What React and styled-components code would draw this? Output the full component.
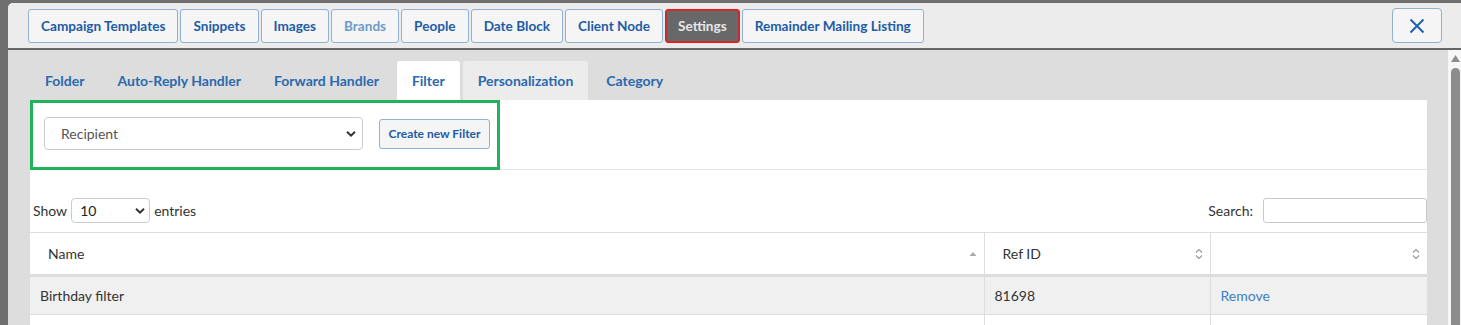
import React from "react"
import styled, { createGlobalStyle } from "styled-components"

const GlobalStyle = createGlobalStyle`
  html, body {
    margin: 0;
    padding: 0;
    height: 100%;
    overflow: hidden;
  }
  body {
    background: #6f6f6f;
    font-family: Lato, "Liberation Sans", sans-serif;
  }
`

const Backdrop = styled.div`
  height: 325px;
  padding: 3px 0 0 8px;
  box-sizing: border-box;
  display: flex;
`

const Modal = styled.div`
  flex: 1;
  display: flex;
  flex-direction: column;
  background: #dddddd;
  border-top-left-radius: 5px;
  overflow: hidden;
`

const Header = styled.div`
  display: flex;
  align-items: center;
  justify-content: space-between;
  height: 47px;
  padding: 0 19px 0 20px;
  background: #ececec;
  border-bottom: 2px solid #666;
  box-sizing: border-box;
  flex-shrink: 0;
`

const NavGroup = styled.div`
  display: flex;
  gap: 2px;
`

const NavButton = styled.button`
  height: 34px;
  padding: 0 12px;
  font-family: inherit;
  font-size: 13.6px;
  font-weight: 700;
  border-radius: 3px;
  border-width: 1px;
  border-style: solid;
  border-color: ${(p) => (p.$active ? "#f01818" : "#8fb1d3")};
  box-shadow: ${(p) => (p.$active ? "inset 0 0 0 1px #c03030" : "none")};
  background: ${(p) => (p.$active ? "#686868" : "#f5f5f5")};
  color: ${(p) => (p.$active ? "#e6e6e6" : p.$muted ? "#6d9bcb" : "#1d5ca5")};
  cursor: pointer;
`

const CloseButton = styled.button`
  width: 50px;
  height: 35px;
  display: flex;
  align-items: center;
  justify-content: center;
  background: #f5f5f5;
  border: 1px solid #8fb1d3;
  border-radius: 4px;
  color: #1f62b0;
  padding: 0;
`

const Body = styled.div`
  flex: 1;
  display: flex;
  min-height: 0;
`

const Content = styled.div`
  flex: 1;
  padding: 11px 21px 0 22px;
  min-width: 0;
`

const SubTabs = styled.div`
  display: flex;
  gap: 3px;
  height: 39px;
`

const SubTab = styled.div`
  display: flex;
  align-items: center;
  padding: 0 15px;
  font-size: 14px;
  font-weight: 700;
  color: #2a69ae;
  border-radius: 3px 3px 0 0;
  background: ${(p) => (p.$active ? "#fff" : p.$raised ? "#ececec" : "transparent")};
`

const Panel = styled.div`
  background: #fff;
  height: 100%;
`

const Toolbar = styled.div`
  border-bottom: 1px solid #e4e4e4;
`

const FilterBox = styled.div`
  width: 470px;
  height: 70px;
  box-sizing: border-box;
  border: 3px solid #20b35a;
  display: flex;
  align-items: center;
  gap: 16px;
  padding: 0 0 3px 11px;
  margin-bottom: -1px;
`

const SelectWrap = styled.div`
  position: relative;
  width: ${(p) => p.$w}px;
  height: ${(p) => p.$h}px;
`

const Select = styled.div`
  height: 100%;
  box-sizing: border-box;
  border: 1px solid #cccccc;
  border-radius: 4px;
  display: flex;
  align-items: center;
  padding-left: ${(p) => p.$pad}px;
  font-size: 14px;
  color: ${(p) => p.$color};
  background: #fff;
`

const Chevron = styled.svg`
  position: absolute;
  right: ${(p) => p.$right}px;
  top: 50%;
  transform: translateY(-50%);
`

const SmallButton = styled.button`
  width: 111px;
  height: 30px;
  font-family: inherit;
  font-size: 12px;
  font-weight: 700;
  color: #1d5ca5;
  background: #f5f5f5;
  border: 1px solid #8fb1d3;
  border-radius: 3px;
  padding: 0;
`

const Controls = styled.div`
  display: flex;
  align-items: center;
  justify-content: space-between;
  padding: 28px 0 9px 3px;
  font-size: 14px;
  color: #333;
`

const Inline = styled.div`
  display: flex;
  align-items: center;
  gap: 4px;
`

const SearchInput = styled.div`
  width: 164px;
  height: 25px;
  box-sizing: border-box;
  border: 1px solid #c8c8c8;
  border-radius: 3px;
  margin-left: 6px;
`

const Table = styled.table`
  width: 100%;
  border-collapse: collapse;
  table-layout: fixed;
  font-size: 14px;
  color: #333;
`

const Th = styled.th`
  position: relative;
  height: 41px;
  padding: 0 18px;
  text-align: left;
  font-weight: 400;
  border-top: 1px solid #dddddd;
  border-bottom: 3px solid #dddddd;
  border-left: ${(p) => (p.$first ? "none" : "1px solid #dddddd")};
`

const SortIcon = styled.svg`
  position: absolute;
  right: 7px;
  top: 50%;
  transform: translateY(-50%);
`

const Td = styled.td`
  height: 37px;
  padding: 0 10px;
  background: ${(p) => (p.$shade ? "#f0f0f0" : "#fff")};
  border-bottom: 1px solid #dddddd;
  border-left: ${(p) => (p.$first ? "none" : "1px solid #dddddd")};
  color: ${(p) => (p.$link ? "#3b7fc1" : "#333")};
`

const Scrollbar = styled.div`
  width: 13px;
  background: #f6f6f6;
  display: flex;
  flex-direction: column;
  align-items: flex-end;
  padding: 5px 1px 0 0;
  box-sizing: border-box;
  gap: 6px;
`

const Thumb = styled.div`
  width: 9px;
  flex: 1;
  background: #8c8c8c;
  border-radius: 5px 5px 0 0;
`

const navItems = [
  "Campaign Templates",
  "Snippets",
  "Images",
  "Brands",
  "People",
  "Date Block",
  "Client Node",
  "Settings",
  "Remainder Mailing Listing",
]

const subTabs = ["Folder", "Auto-Reply Handler", "Forward Handler", "Filter", "Personalization", "Category"]

const ChevronDown = ({ right }) => (
  <Chevron $right={right} width="10" height="7" viewBox="0 0 10 7">
    <path d="M1 1.2 5 5.2 9 1.2" fill="none" stroke="#333" strokeWidth="2" />
  </Chevron>
)

const BothArrows = () => (
  <SortIcon width="8" height="12" viewBox="0 0 8 12">
    <path d="M1 4.5 4 1.5 7 4.5M1 7.5 4 10.5 7 7.5" fill="none" stroke="#999" strokeWidth="1.1" />
  </SortIcon>
)

const UpArrow = () => (
  <SortIcon width="8" height="12" viewBox="0 0 8 12">
    <path d="M0.5 8 4 4 7.5 8Z" fill="#aaa" />
  </SortIcon>
)

export default function App() {
  return (
    <>
      <GlobalStyle />
      <Backdrop>
        <Modal>
          <Header>
            <NavGroup>
              {navItems.map((n) => (
                <NavButton key={n} $active={n === "Settings"} $muted={n === "Brands"}>
                  {n}
                </NavButton>
              ))}
            </NavGroup>
            <CloseButton>
              <svg width="16" height="16" viewBox="0 0 16 16">
                <path d="M1.5 1.5 14.5 14.5M14.5 1.5 1.5 14.5" stroke="currentColor" strokeWidth="2" />
              </svg>
            </CloseButton>
          </Header>
          <Body>
            <Content>
              <SubTabs>
                {subTabs.map((t) => (
                  <SubTab key={t} $active={t === "Filter"} $raised={t === "Personalization"}>
                    {t}
                  </SubTab>
                ))}
              </SubTabs>
              <Panel>
                <Toolbar>
                  <FilterBox>
                    <SelectWrap $w={319} $h={33}>
                      <Select $pad={16} $color="#555">Recipient</Select>
                      <ChevronDown right={7} />
                    </SelectWrap>
                    <SmallButton>Create new Filter</SmallButton>
                  </FilterBox>
                </Toolbar>
                <Controls>
                  <Inline>
                    Show
                    <SelectWrap $w={79} $h={25}>
                      <Select $pad={8} $color="#222">10</Select>
                      <ChevronDown right={5} />
                    </SelectWrap>
                    entries
                  </Inline>
                  <Inline>
                    Search:
                    <SearchInput />
                  </Inline>
                </Controls>
                <Table>
                  <colgroup>
                    <col style={{ width: 954 }} />
                    <col style={{ width: 226 }} />
                    <col />
                  </colgroup>
                  <thead>
                    <tr>
                      <Th $first>
                        Name
                        <UpArrow />
                      </Th>
                      <Th>
                        Ref ID
                        <BothArrows />
                      </Th>
                      <Th>
                        <BothArrows />
                      </Th>
                    </tr>
                  </thead>
                  <tbody>
                    <tr>
                      <Td $first $shade>Birthday filter</Td>
                      <Td $shade>81698</Td>
                      <Td $shade $link>Remove</Td>
                    </tr>
                    <tr>
                      <Td $first />
                      <Td />
                      <Td />
                    </tr>
                  </tbody>
                </Table>
              </Panel>
            </Content>
            <Scrollbar>
              <svg width="9" height="7" viewBox="0 0 9 7">
                <path d="M0 7 4.5 0 9 7Z" fill="#8c8c8c" />
              </svg>
              <Thumb />
            </Scrollbar>
          </Body>
        </Modal>
      </Backdrop>
    </>
  )
}
